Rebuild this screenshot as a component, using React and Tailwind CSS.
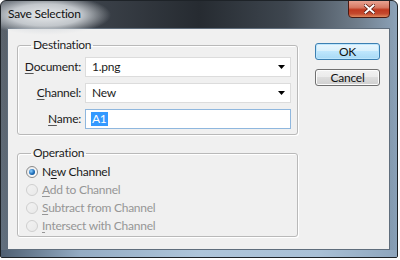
import React from 'react';

const font = { fontFamily: 'Lato, "Noto Sans", sans-serif' };

const Arrow = () => (
  <svg width="7" height="4" viewBox="0 0 7 4" className="block">
    <path d="M0 0H7L3.5 4Z" fill="#000" />
  </svg>
);

const Row = ({ label, u, children }) => (
  <div className="flex items-center h-[20px]">
    <div className="w-[64px] text-right pr-[1px]">
      <span className="underline underline-offset-2 decoration-[#555]">{u}</span>
      {label}
    </div>
    <div className="flex-1 ml-[3px] h-full">{children}</div>
  </div>
);

const Select = ({ value }) => (
  <div className="h-full bg-white border border-[#dcdcdc] flex items-center justify-between pl-[6px] pr-[5px]">
    <span>{value}</span>
    <Arrow />
  </div>
);

const Radio = ({ checked, disabled, u, pre = '', rest }) => (
  <div className={`flex items-center h-[18px] ${disabled ? 'text-[#969696]' : 'text-[#1b1b1b]'}`}>
    <div
      className={`ml-[8px] w-[12px] h-[12px] rounded-full border flex items-center justify-center ${
        disabled
          ? 'border-[#cfcfcf] bg-[linear-gradient(135deg,#f2f2f2,#e9e9e9)]'
          : 'border-[#8a8a8a] bg-[linear-gradient(135deg,#e8e8e8,#ffffff)]'
      }`}
    >
      {checked && (
        <div className="w-[6px] h-[6px] rounded-full bg-[radial-gradient(circle_at_35%_35%,#8fd0ff,#1c6cb8_55%,#0b3f78)]" />
      )}
    </div>
    <span className="ml-[4px]">
      {pre}
      <span className="underline underline-offset-2">{u}</span>
      {rest}
    </span>
  </div>
);

export default function App() {
  return (
    <div className="w-[400px] h-[260px] bg-white overflow-hidden text-[12px] leading-[16px] tracking-[-0.25px]" style={font}>
      <div className="w-[398px] h-[258px] rounded-t-[6px] rounded-b-[2px] border border-[#1e2328] flex flex-col overflow-hidden bg-[linear-gradient(90deg,#5a626b_0%,#3a4048_25%,#262b31_50%,#3e464f_72%,#6f7d8b_90%,#8ca2b8_100%)]">
        {/* title bar */}
        <div className="h-[27px] flex items-start justify-between relative">
          <div className="absolute -left-[20px] -top-[6px] w-[130px] h-[40px] bg-[radial-gradient(closest-side,rgba(240,242,244,0.95)_0%,rgba(215,219,223,0.85)_55%,rgba(150,158,166,0)_100%)]" />
          <span className="relative ml-[7px] mt-[5px] text-[#111]">Save Selection</span>
          <div className="relative mr-[7px] -mt-[1px] w-[42px] h-[18px] rounded-b-[4px] border border-[#4a1a12] bg-[linear-gradient(180deg,#e9a291_0%,#d77a64_40%,#c0391f_55%,#c4492e_80%,#e08a5e_100%)] flex items-center justify-center">
            <svg width="11" height="10" viewBox="0 0 11 10">
              <path d="M1.5 1.5L9.5 8.5M9.5 1.5L1.5 8.5" stroke="#5a1a10" strokeWidth="3.6" strokeLinecap="square" />
              <path d="M1.5 1.5L9.5 8.5M9.5 1.5L1.5 8.5" stroke="#ffffff" strokeWidth="2" strokeLinecap="square" />
            </svg>
          </div>
        </div>

        {/* client area */}
        <div className="flex-1 flex px-[6px] pr-[7px] bg-[linear-gradient(180deg,transparent_0%,rgba(120,150,180,0.25)_100%)]">
          <div className="flex-1 bg-[#f0f0f0] border border-[#5f6d7c] flex items-start">
            <div className="ml-[9px] mt-[8px] w-[281px] flex flex-col">
              <fieldset className="border border-[#b9b9b9] rounded-[3px] pb-[5px] pr-[6px] shadow-[inset_1px_1px_0_#fff,1px_1px_0_#fff]">
                <legend className="ml-[13px] px-[2px] text-[#1e1e1e]">Destination</legend>
                <div className="flex flex-col gap-[6px] pt-[4px] text-[#1b1b1b]">
                  <Row u="D" label="ocument:">
                    <Select value="1.png" />
                  </Row>
                  <Row u="C" label="hannel:">
                    <Select value="New" />
                  </Row>
                  <Row u="N" label="ame:">
                    <div className="h-full bg-white border border-[#8fb7de] flex items-center pl-[5px]">
                      <span className="bg-[#3399ff] text-white px-[1px] leading-[14px]">A1</span>
                    </div>
                  </Row>
                </div>
              </fieldset>

              <fieldset className="mt-[10px] border border-[#b9b9b9] rounded-[3px] pt-[2px] pb-[1px] shadow-[inset_1px_1px_0_#fff,1px_1px_0_#fff]">
                <legend className="ml-[13px] px-[2px] text-[#1e1e1e]">Operation</legend>
                <Radio checked pre="N" u="e" rest="w Channel" />
                <Radio disabled u="A" rest="dd to Channel" />
                <Radio disabled u="S" rest="ubtract from Channel" />
                <Radio disabled u="I" rest="ntersect with Channel" />
              </fieldset>
            </div>

            <div className="ml-[17px] mt-[14px] w-[65px] flex flex-col gap-[9px]">
              <button className="h-[17px] rounded-[3px] border border-[#3c7fb1] bg-[linear-gradient(180deg,#eaf6fd_0%,#d9f0fc_45%,#bee6fd_50%,#a7d9f5_100%)] shadow-[inset_0_0_0_1px_#bde6fd] text-[#111] leading-[14px]">
                OK
              </button>
              <button className="h-[17px] rounded-[3px] border border-[#707070] bg-[linear-gradient(180deg,#f2f2f2_0%,#ebebeb_45%,#dddddd_50%,#cfcfcf_100%)] shadow-[inset_0_0_0_1px_#fcfcfc] text-[#111] leading-[14px]">
                Cancel
              </button>
            </div>
          </div>
        </div>

        <div className="h-[7px] bg-[linear-gradient(90deg,#4e5f72_0%,#94acc4_20%,#aec5da_50%,#a9c0d6_80%,#8ea6be_100%)]" />
      </div>
    </div>
  );
}
